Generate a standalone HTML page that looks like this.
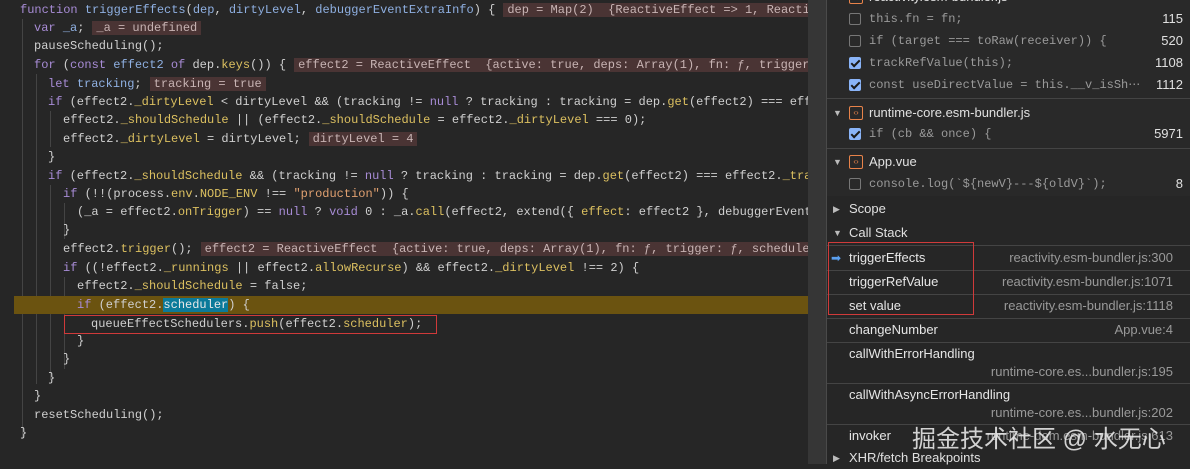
<!DOCTYPE html>
<html><head><meta charset="utf-8"><style>
*{margin:0;padding:0;box-sizing:border-box}
body{width:1190px;height:464px;overflow:hidden;background:#262626;position:relative;font-family:"Liberation Sans",sans-serif}
#code{position:absolute;left:0;top:0;width:808px;height:464px;background:#262626;overflow:hidden;font-family:"Liberation Mono",monospace;font-size:12px;color:#d0d0d0}
.l{position:absolute;left:0;height:18px;line-height:18px;white-space:pre}
.k{color:#a88cd6}.f{color:#8fb0e2}.p{color:#dcc060}.s{color:#e0a070}
.v{background:#4a3434;color:#c8b4b4;padding:0 4px;margin-left:8px}
.g{position:absolute;width:1px;background:#444}
#sb{position:absolute;left:808px;top:0;width:18px;height:464px;background:#363636}
#rp{position:absolute;left:826px;top:0;width:364px;height:464px;background:#292929;border-left:1px solid #4a4a4a;color:#e0e0e0;font-size:13px}
.r{position:absolute;left:0;width:364px;height:22px;line-height:22px;white-space:nowrap}
.cb{position:absolute;left:22px;top:5px;width:12px;height:12px;border:1px solid #777;border-radius:2px}
.cb.on{background:#8ab4f8;border-color:#8ab4f8}
.cb.on:after{content:"";position:absolute;left:3px;top:0px;width:3px;height:7px;border:solid #1a1a1a;border-width:0 2px 2px 0;transform:rotate(45deg)}
.bc{position:absolute;left:42px;font-family:"Liberation Mono",monospace;font-size:12px;color:#9a9a9a}
.ln{position:absolute;right:8px;color:#e0e0e0}
.fi{position:absolute;left:22px;top:4px;width:14px;height:14px;border:1.5px solid #e8834a;border-radius:2px;font-size:8px;color:#e8834a;line-height:11px;text-align:center}
.tri{position:absolute;left:6px;color:#bbb;font-size:9px}
.sep{position:absolute;left:0;width:364px;height:1px;background:#444}
.cs{position:absolute;left:22px;color:#e6e6e6}
.loc{position:absolute;right:18px;color:#999}
</style></head><body>
<div id="code">
<div class="g" style="left:22px;top:19px;height:420px"></div>
<div class="g" style="left:36px;top:74px;height:310px"></div>
<div class="g" style="left:50px;top:111px;height:36px"></div>
<div class="g" style="left:50px;top:185px;height:195px"></div>
<div class="g" style="left:64px;top:203px;height:36px"></div>
<div class="g" style="left:64px;top:277px;height:92px"></div>
<div style="position:absolute;left:14px;top:296px;width:794px;height:18px;background:#6b5310"></div>
<div style="position:absolute;left:64px;top:315px;width:373px;height:19px;border:1px solid #d03a3a"></div>
<div class="l" style="top:1px;left:20px"><span class="k">function</span> <span class="f">triggerEffects</span>(<span class="f">dep</span>, <span class="f">dirtyLevel</span>, <span class="f">debuggerEventExtraInfo</span>) {<span class="v">dep = Map(2)  {ReactiveEffect =&gt; 1, ReactiveEffect =&gt; 1}</span></div>
<div class="l" style="top:19px;left:34px"><span class="k">var</span> <span class="f">_a</span>;<span class="v">_a = undefined</span></div>
<div class="l" style="top:37px;left:34px">pauseScheduling();</div>
<div class="l" style="top:56px;left:34px"><span class="k">for</span> (<span class="k">const</span> <span class="f">effect2</span> <span class="k">of</span> dep.<span class="p">keys</span>()) {<span class="v">effect2 = ReactiveEffect  {active: true, deps: Array(1), fn: ƒ, trigger: ƒ, scheduler: ƒ, …}</span></div>
<div class="l" style="top:75px;left:48px"><span class="k">let</span> <span class="f">tracking</span>;<span class="v">tracking = true</span></div>
<div class="l" style="top:93px;left:48px"><span class="k">if</span> (effect2.<span class="p">_dirtyLevel</span> &lt; dirtyLevel &amp;&amp; (tracking != <span class="k">null</span> ? tracking : tracking = dep.<span class="p">get</span>(effect2) === effect2._trackId)) {</div>
<div class="l" style="top:111px;left:63px">effect2.<span class="p">_shouldSchedule</span> || (effect2.<span class="p">_shouldSchedule</span> = effect2.<span class="p">_dirtyLevel</span> === 0);</div>
<div class="l" style="top:130px;left:63px">effect2.<span class="p">_dirtyLevel</span> = dirtyLevel;<span class="v">dirtyLevel = 4</span></div>
<div class="l" style="top:148px;left:48px">}</div>
<div class="l" style="top:167px;left:48px"><span class="k">if</span> (effect2.<span class="p">_shouldSchedule</span> &amp;&amp; (tracking != <span class="k">null</span> ? tracking : tracking = dep.<span class="p">get</span>(effect2) === effect2.<span class="p">_trackId</span>)) {</div>
<div class="l" style="top:185px;left:63px"><span class="k">if</span> (!!(process.<span class="p">env</span>.<span class="p">NODE_ENV</span> !== <span class="s">"production"</span>)) {</div>
<div class="l" style="top:203px;left:77px">(_a = effect2.<span class="p">onTrigger</span>) == <span class="k">null</span> ? <span class="k">void</span> 0 : _a.<span class="p">call</span>(effect2, extend({ <span class="p">effect</span>: effect2 }, debuggerEventExtraInfo));</div>
<div class="l" style="top:221px;left:63px">}</div>
<div class="l" style="top:240px;left:63px">effect2.<span class="p">trigger</span>();<span class="v">effect2 = ReactiveEffect  {active: true, deps: Array(1), fn: ƒ, trigger: ƒ, scheduler: ƒ, …}</span></div>
<div class="l" style="top:259px;left:63px"><span class="k">if</span> ((!effect2.<span class="p">_runnings</span> || effect2.<span class="p">allowRecurse</span>) &amp;&amp; effect2.<span class="p">_dirtyLevel</span> !== 2) {</div>
<div class="l" style="top:277px;left:77px">effect2.<span class="p">_shouldSchedule</span> = false;</div>
<div class="l" style="top:296px;left:77px"><span class="k">if</span> (effect2.<span style="background:#0b7a9a;color:#e8e8e8">scheduler</span>) {</div>
<div class="l" style="top:315px;left:91px">queueEffectSchedulers.<span class="p">push</span>(effect2.<span class="p">scheduler</span>);</div>
<div class="l" style="top:332px;left:77px">}</div>
<div class="l" style="top:350px;left:63px">}</div>
<div class="l" style="top:369px;left:48px">}</div>
<div class="l" style="top:387px;left:34px">}</div>
<div class="l" style="top:406px;left:34px">resetScheduling();</div>
<div class="l" style="top:424px;left:20px">}</div>
</div>
<div id="sb"></div>
<div id="rp">
<div class="r" style="top:-14px"><span class="tri">▼</span><span class="fi">‹›</span><span style="position:absolute;left:42px">reactivity.esm-bundler.js</span></div>
<div class="r" style="top:8px"><span class="cb"></span><span class="bc">this.fn = fn;</span><span class="ln">115</span></div>
<div class="r" style="top:30px"><span class="cb"></span><span class="bc">if (target === toRaw(receiver)) {</span><span class="ln">520</span></div>
<div class="r" style="top:52px"><span class="cb on"></span><span class="bc">trackRefValue(this);</span><span class="ln">1108</span></div>
<div class="r" style="top:74px"><span class="cb on"></span><span class="bc">const useDirectValue = this.__v_isSh⋯</span><span class="ln">1112</span></div>
<div class="sep" style="top:98px"></div>
<div class="r" style="top:102px"><span class="tri">▼</span><span class="fi">‹›</span><span style="position:absolute;left:42px">runtime-core.esm-bundler.js</span></div>
<div class="r" style="top:123px"><span class="cb on"></span><span class="bc">if (cb &amp;&amp; once) {</span><span class="ln">5971</span></div>
<div class="sep" style="top:148px"></div>
<div class="r" style="top:151px"><span class="tri">▼</span><span class="fi">‹›</span><span style="position:absolute;left:42px">App.vue</span></div>
<div class="r" style="top:173px"><span class="cb"></span><span class="bc">console.log(`${newV}---${oldV}`);</span><span class="ln">8</span></div>
<div style="position:absolute;left:0;top:196px;width:364px;height:268px;background:#262626"></div>
<div class="r" style="top:198px"><span class="tri">▶</span><span style="position:absolute;left:22px">Scope</span></div>
<div class="r" style="top:222px"><span class="tri">▼</span><span style="position:absolute;left:22px">Call Stack</span></div>
<div class="sep" style="top:245px"></div>
<div class="r" style="top:247px"><span style="position:absolute;left:4px;color:#5aa0f0;font-size:12px">➡</span><span class="cs">triggerEffects</span><span class="loc">reactivity.esm-bundler.js:300</span></div>
<div class="sep" style="top:270px"></div>
<div class="r" style="top:271px"><span class="cs">triggerRefValue</span><span class="loc">reactivity.esm-bundler.js:1071</span></div>
<div class="sep" style="top:294px"></div>
<div class="r" style="top:295px"><span class="cs">set value</span><span class="loc">reactivity.esm-bundler.js:1118</span></div>
<div class="sep" style="top:318px"></div>
<div class="r" style="top:319px"><span class="cs">changeNumber</span><span class="loc">App.vue:4</span></div>
<div class="sep" style="top:342px"></div>
<div class="r" style="top:343px"><span class="cs">callWithErrorHandling</span></div>
<div class="r" style="top:361px"><span class="loc">runtime-core.es...bundler.js:195</span></div>
<div class="sep" style="top:383px"></div>
<div class="r" style="top:384px"><span class="cs">callWithAsyncErrorHandling</span></div>
<div class="r" style="top:402px"><span class="loc">runtime-core.es...bundler.js:202</span></div>
<div class="sep" style="top:424px"></div>
<div class="r" style="top:425px"><span class="cs">invoker</span><span class="loc">runtime-dom.esm-bundler.js:613</span></div>
<div class="r" style="top:447px"><span class="tri">▶</span><span style="position:absolute;left:22px">XHR/fetch Breakpoints</span></div>
<div style="position:absolute;left:1px;top:242px;width:146px;height:73px;border:1px solid #d03a3a"></div>
</div>
<div style="position:absolute;left:912px;top:419px;font-family:'Liberation Sans','Noto Sans CJK SC',sans-serif;font-size:24px;color:rgba(235,235,235,0.88);white-space:nowrap">掘金技术社区 @ 水无心</div>
</body></html>
